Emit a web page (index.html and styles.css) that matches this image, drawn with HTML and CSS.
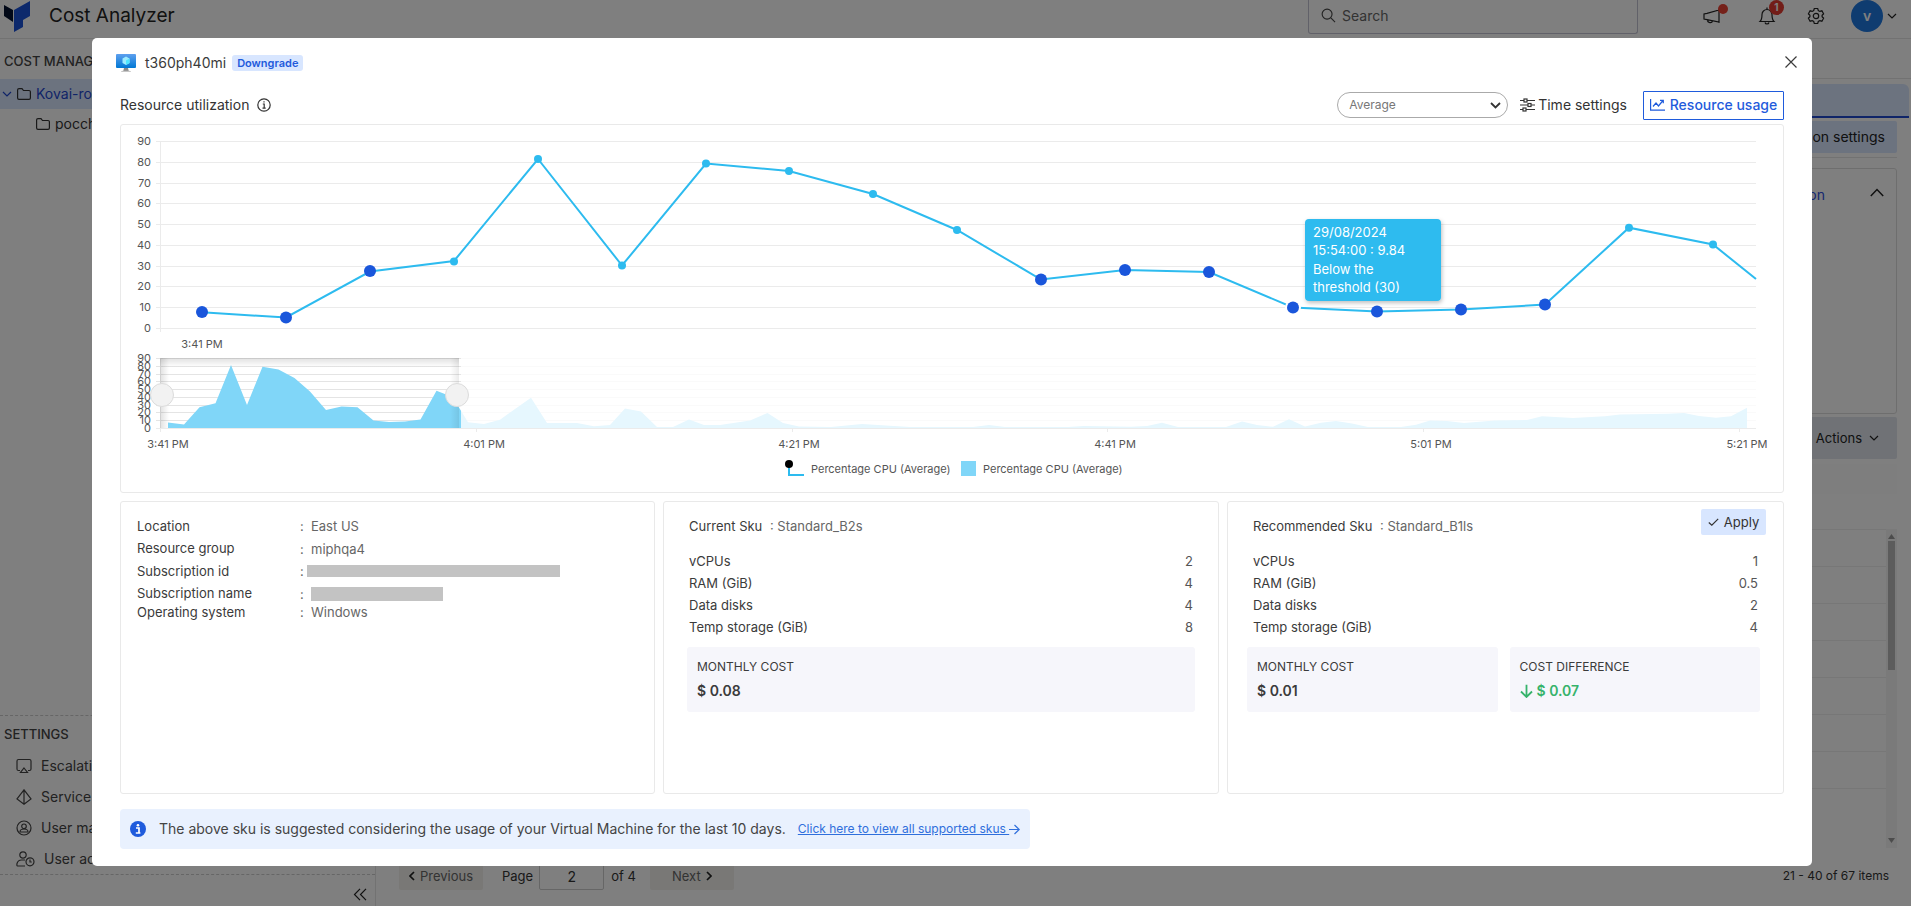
FILE: index.html
```html
<!DOCTYPE html>
<html lang="en">
<head>
<meta charset="utf-8">
<title>Cost Analyzer</title>
<link rel="stylesheet" href="styles.css">
</head>
<body>
<div class="app">
  <header class="topbar">
    <svg class="logo" width="28" height="32" viewBox="0 0 28 32" aria-hidden="true"><path d="M0 5l9 5v12L0 16z" fill="#02102e"/><path d="M26 1v15l-7 4v7l-9 5V10z" fill="#1b52d8"/></svg>
    <h1 class="app-name">Cost Analyzer</h1>
    <label class="search"><svg class="ico" width="15" height="15" viewBox="0 0 16 16"><circle cx="6.5" cy="6.5" r="5.3"/><path d="M10.5 10.5L15 15"/></svg><input type="text" placeholder="Search" aria-label="Search"></label>
    <nav class="top-actions">
      <button class="icon-btn" aria-label="Announcements"><svg class="ico" width="22" height="20" viewBox="0 0 22 20"><path d="M2 8v5l3 .6L17 16V4L5 7.400z M17 3v14 M5.500 14c0 3 4.500 3.500 5 .8"/></svg><i class="dot"></i></button>
      <button class="icon-btn" aria-label="Notifications"><svg class="ico" width="18" height="20" viewBox="0 0 18 20"><path d="M2 15.500c2-2 2-4 2-7a5 5 0 0 1 10 0c0 3 0 5 2 7z M7 16.500c.5 2 3.500 2 4 0 M9 3V1.500"/></svg><b class="count">1</b></button>
      <button class="icon-btn" aria-label="Settings"><svg class="ico" width="18" height="18" viewBox="0 0 18 18"><circle cx="9" cy="9" r="2.700"/><path d="M7.300 1.500h3.400l.6 2 1.500.9 2.100-.6 1.700 3-1.500 1.400v1.600l1.500 1.400-1.700 3-2.100-.6-1.500.9-.6 2H7.300l-.6-2-1.500-.9-2.100.6-1.700-3 1.500-1.400V8.200L1.400 6.800l1.700-3 2.100.6 1.500-.9z"/></svg></button>
      <button class="profile" aria-label="Profile"><span class="avatar">v</span><svg class="ico" width="10" height="6" viewBox="0 0 10 6"><path d="M1 1l4 4 4-4"/></svg></button>
    </nav>
  </header>
  <aside class="side">
    <h2 class="side-title">COST MANAGEMENT</h2>
    <a class="tree active" href="#"><svg class="ico blue" width="10" height="6" viewBox="0 0 10 6"><path d="M1 1l4 4 4-4"/></svg><svg class="ico" width="14" height="12" viewBox="0 0 14 12"><path d="M.6 10V2q0-1.400 1.400-1.400h3L6.500 2.500H12q1.400 0 1.400 1.300V10q0 1.400-1.400 1.400H2Q.6 11.400.6 10z"/></svg>Kovai-root</a>
    <a class="tree child" href="#"><svg class="ico" width="14" height="12" viewBox="0 0 14 12"><path d="M.6 10V2q0-1.400 1.400-1.400h3L6.500 2.500H12q1.400 0 1.400 1.300V10q0 1.400-1.400 1.400H2Q.6 11.400.6 10z"/></svg>poccharts</a>
    <section class="side-settings">
      <h2 class="side-title">SETTINGS</h2>
      <a href="#"><svg class="ico" width="16" height="16" viewBox="0 0 16 16"><path d="M4 12.500H2.500q-1.500 0-1.500-1.500V3q0-1.500 1.500-1.500h11Q15 1.500 15 3v8q0 1.500-1.500 1.500H12 M8 10l3.500 4.500h-7z"/></svg>Escalation policies</a>
      <a href="#"><svg class="ico" width="16" height="16" viewBox="0 0 16 16"><path d="M8 .8L1 10l7 5.200L15 10z M8 .8v14.400"/></svg>Service principals</a>
      <a href="#"><svg class="ico" width="16" height="16" viewBox="0 0 16 16"><circle cx="8" cy="8" r="7"/><circle cx="8" cy="6.300" r="2.300"/><path d="M4 12c0-4 8-4 8 0z"/></svg>User management</a>
      <a href="#"><svg class="ico" width="19" height="16" viewBox="0 0 19 16"><circle cx="7" cy="4" r="3.200"/><path d="M9 15H1.500Q.6 15 1 12.500 2 9 5.500 9H9"/><circle cx="14" cy="10.800" r="4"/><path d="M14 8.500V11h1.800"/></svg>User activities</a>
    </section>
    <button class="collapse" aria-label="Collapse"><svg class="ico" width="14" height="13" viewBox="0 0 14 13"><path d="M7 .8L1.500 6.500 7 12.200 M13 .8L7.500 6.500 13 12.200"/></svg></button>
  </aside>
  <main class="page">
    <div class="crumbs"></div>
    <div class="tabs"></div>
    <div class="tools"><button class="soft">Optimization settings</button></div>
    <section class="panel"><a href="#">Configuration</a><svg class="ico" width="14" height="9" viewBox="0 0 14 9"><path d="M.8 8L7 1.500 13.200 8"/></svg></section>
    <div class="actions"><button>Actions <svg class="ico" width="10" height="6" viewBox="0 0 10 6"><path d="M1 1l4 4 4-4"/></svg></button></div>
    <div class="thead"></div>
    <div class="grid-wrap">
      <div class="rows"><div></div><div></div><div></div><div></div><div></div><div></div><div></div><div></div></div>
      <div class="scroll"><svg width="7" height="5" viewBox="0 0 7 5"><path d="M0 5L3.500 0 7 5z"/></svg><span class="thumb"></span><svg width="7" height="5" viewBox="0 0 7 5"><path d="M0 0L3.500 5 7 0z"/></svg></div>
    </div>
    <footer class="pager">
      <button><svg class="ico" width="6" height="10" viewBox="0 0 6 10"><path d="M5 1L1 5l4 4"/></svg>Previous</button>
      <label for="pg">Page</label><input id="pg" type="text" value="2"><span>of 4</span>
      <button>Next<svg class="ico" width="6" height="10" viewBox="0 0 6 10"><path d="M1 1l4 4-4 4"/></svg></button>
      <span class="total">21 - 40 of 67 items</span>
    </footer>
  </main>
</div>

<div class="overlay">
<div class="modal" role="dialog" aria-label="t360ph40mi">
  <header class="m-head">
    <svg width="20" height="19" viewBox="0 0 20 19"><defs><linearGradient id="vm" x1="0" y1="0" x2="0" y2="1"><stop offset="0" stop-color="#5ea0ef"/><stop offset="1" stop-color="#0078d4"/></linearGradient></defs><rect width="20" height="14" rx="1" fill="url(#vm)"/><path d="M10 2.500l3.500 2v4.500L10 11 6.500 9V4.500z" fill="#9cebff"/><path d="M10 6.500V11l3.500-2V4.500z" fill="#50e6ff"/><path d="M8 14h4l1 4H7z" fill="#8a8a8a"/><path d="M5 18q0-1.300 2-1.300h6q2 0 2 1.300z" fill="#c6c6c6"/></svg>
    <h2>t360ph40mi</h2><span class="badge">Downgrade</span>
    <button class="close" aria-label="Close"><svg class="ico" width="14" height="14" viewBox="0 0 14 14"><path d="M1.500 1.500l11 11 M12.500 1.500l-11 11"/></svg></button>
  </header>
  <div class="m-tools">
    <h3>Resource utilization</h3>
    <svg class="ico" width="14" height="14" viewBox="0 0 14 14"><circle cx="7" cy="7" r="6.200"/><path d="M5.800 6H7.200v4 M5.500 10.200h3.200 M7 3.200v1.300"/></svg>
    <span class="select"><select aria-label="Aggregation"><option>Average</option></select><svg class="ico" width="11" height="7" viewBox="0 0 11 7"><path d="M1 1l4.500 4.500L10 1"/></svg></span>
    <button class="plain"><svg class="ico" width="15" height="14" viewBox="0 0 15 14"><path d="M0 2.500h4 M7 2.500h8 M0 7h8 M11 7h4 M0 11.500h3 M6 11.500h9"/><rect x="4" y="1" width="3" height="3"/><rect x="8" y="5.500" width="3" height="3"/><rect x="3" y="10" width="3" height="3"/></svg>Time settings</button>
    <button class="outline"><svg class="ico" width="15" height="12" viewBox="0 0 15 12"><path d="M.6 0v11.200H15 M3 7.500L6 4l2.500 3L13 1.500 M10 1.300h3.300v3"/></svg>Resource usage</button>
  </div>

  <section class="box chart">
    <svg viewBox="121 126 1662 367" role="img" aria-label="Percentage CPU (Average)">
      <defs>
        <path id="areaShape" d="M168 429.500V423.400L184 425.400 199.500 408.200 215.500 404.200 231 366 247 406 262.500 367.700 278.500 370.500 294.500 379 310 392.600 326 411 341.500 407.600 357.500 408.300 373.500 421.600 389 423.100 405 422.400 420.500 420.500 436.500 391.800 452.500 398 468 423.300 484 425 500 420.700 515 410 531 398.700 547 424 577 424 594 427.300 610 426 625 409.500 641 412.500 657 428 673 428 689 420.500 704 426 720 426 750 421.500 767.500 414 783 424 799 427.500 831 428 862 425 910 428 973 428 989 426 1005 428 1068 428 1084 427 1131 427.800 1147 427 1162 423.700 1178 428 1226 428 1242 422.500 1257 426 1273 427.800 1289 420.300 1305 427.500 1321 423.700 1336 422 1352 424.500 1368 428 1401 428 1416 425.700 1430 421.500 1447 422 1464 424 1495 421.500 1527 421 1542 417.300 1573 419 1605 417.300 1620 415.500 1668 414.700 1684 414 1699 417 1716 418.700 1731 417.300 1747 408.700V429.500z"/>
        <clipPath id="sel"><rect x="155" y="355" width="306" height="80"/></clipPath>
        <clipPath id="rest"><rect x="461" y="355" width="1300" height="80"/></clipPath>
        <linearGradient id="edgeY" x1="0" y1="0" x2="0" y2="1"><stop offset="0" stop-color="#000" stop-opacity=".12"/><stop offset="1" stop-color="#000" stop-opacity="0"/></linearGradient>
        <linearGradient id="edgeL"><stop offset="0" stop-color="#000" stop-opacity=".12"/><stop offset="1" stop-color="#000" stop-opacity="0"/></linearGradient>
        <linearGradient id="edgeR"><stop offset="0" stop-color="#000" stop-opacity="0"/><stop offset="1" stop-color="#000" stop-opacity=".08"/></linearGradient>
        <filter id="tipShadow" x="-10%" y="-10%" width="120%" height="125%"><feDropShadow dx="1" dy="2" stdDeviation="2" flood-opacity=".25"/></filter>
      </defs>
      <path class="gridline" d="M156 142.500H1756M156 163.500H1756M156 184.500H1756M156 204.500H1756M156 225.500H1756M156 246.500H1756M156 267.500H1756M156 287.500H1756M156 308.500H1756M156 329.500H1756M160.500 142V333"/>
      <g class="axis end"><text x="151" y="146">90</text><text x="151" y="167">80</text><text x="151" y="188">70</text><text x="151" y="208">60</text><text x="151" y="229">50</text><text x="151" y="250">40</text><text x="151" y="271">30</text><text x="151" y="291">20</text><text x="151" y="312">10</text><text x="151" y="333">0</text></g>
      <text class="axis mid" x="202" y="349">3:41 PM</text>
      <path class="series" d="M202 313.300L286 318.500 370 272.500 454 262 538 160 622 266.500 706 164.500 789 172 873 195 957 231 1041 280.500 1125 271 1209 273 1293 308.500 1377 312.500 1461 310.500 1545 305.500 1629 228.700 1713 245.500 1756 280"/>
      <circle cx="1293" cy="308.500" r="8" fill="#fff"/>
      <g class="low"><circle cx="202" cy="313" r="6"/><circle cx="286" cy="318.500" r="6"/><circle cx="370" cy="272" r="6"/><circle cx="1041" cy="280.500" r="6"/><circle cx="1125" cy="271" r="6"/><circle cx="1209" cy="273" r="6"/><circle cx="1293" cy="308.500" r="6"/><circle cx="1377" cy="312.500" r="6"/><circle cx="1461" cy="310.500" r="6"/><circle cx="1545" cy="305.500" r="6"/></g>
      <g class="ok"><circle cx="454" cy="262.500" r="4"/><circle cx="538" cy="160" r="4"/><circle cx="622" cy="266.500" r="4"/><circle cx="706" cy="164.500" r="4"/><circle cx="789" cy="172" r="4"/><circle cx="873" cy="195" r="4"/><circle cx="957" cy="231" r="4"/><circle cx="1629" cy="228.700" r="4"/><circle cx="1713" cy="245.500" r="4"/></g>

      <g class="axis end"><text x="151" y="363">90</text><text x="151" y="371">80</text><text x="151" y="379">70</text><text x="151" y="386">60</text><text x="151" y="394">50</text><text x="151" y="402">40</text><text x="151" y="410">30</text><text x="151" y="417">20</text><text x="151" y="425">10</text><text x="151" y="433">0</text></g>
      <path class="gridline dark" clip-path="url(#sel)" d="M156 359.500H1756M156 367.500H1756M156 375.500H1756M156 382.500H1756M156 390.500H1756M156 398.500H1756M156 406.500H1756M156 413.500H1756M156 421.500H1756"/>
      <path class="gridline faint" clip-path="url(#rest)" d="M156 359.500H1756M156 367.500H1756M156 375.500H1756M156 382.500H1756M156 390.500H1756M156 398.500H1756M156 406.500H1756M156 413.500H1756M156 421.500H1756"/>
      <use href="#areaShape" clip-path="url(#sel)" fill="#80d6f8"/>
      <use href="#areaShape" clip-path="url(#rest)" fill="#e6f7fe"/>
      <path class="gridline" d="M156 429.500H1756M160.500 359V433M476.500 430V433M792.500 430V433M1107.500 430V433M1423.500 430V433M1739.500 430V433"/>
      <rect x="160" y="359" width="299" height="9" fill="url(#edgeY)"/><rect x="160" y="359" width="9" height="70" fill="url(#edgeL)"/><rect x="450" y="359" width="9" height="70" fill="url(#edgeR)"/>
      <circle class="handle" cx="162" cy="396" r="11.500"/><circle class="handle" cx="457" cy="396" r="11.500"/>
      <g class="axis mid"><text x="168" y="449">3:41 PM</text><text x="484" y="449">4:01 PM</text><text x="799" y="449">4:21 PM</text><text x="1115" y="449">4:41 PM</text><text x="1431" y="449">5:01 PM</text><text x="1747" y="449">5:21 PM</text></g>

      <path d="M789 466V476H804" fill="none" stroke="#2dbbef" stroke-width="2"/><circle cx="789" cy="465" r="4"/>
      <text class="axis" x="811" y="474">Percentage CPU (Average)</text>
      <rect x="961" y="462" width="15" height="15" fill="#80d6f8"/>
      <text class="axis" x="983" y="474">Percentage CPU (Average)</text>

      <rect x="1305" y="220" width="136" height="82" rx="4" fill="#2dbbef" filter="url(#tipShadow)"/>
      <text class="tip"><tspan x="1313" y="238">29/08/2024</tspan><tspan x="1313" y="256">15:54:00 : 9.84</tspan><tspan x="1313" y="275">Below the</tspan><tspan x="1313" y="293">threshold (30)</tspan></text>
    </svg>
  </section>

  <div class="cards">
    <section class="box info">
      <dl>
        <dt>Location</dt><dd>East US</dd>
        <dt>Resource group</dt><dd>miphqa4</dd>
        <dt>Subscription id</dt><dd><span class="mask id"></span></dd>
        <dt>Subscription name</dt><dd><span class="mask name"></span></dd>
        <dt class="tight">Operating system</dt><dd class="tight">Windows</dd>
      </dl>
    </section>
    <section class="box sku">
      <h4>Current Sku <span>: Standard_B2s</span></h4>
      <table><tr><th>vCPUs</th><td>2</td></tr><tr><th>RAM (GiB)</th><td>4</td></tr><tr><th>Data disks</th><td>4</td></tr><tr><th>Temp storage (GiB)</th><td>8</td></tr></table>
      <div class="costs"><div class="cost">MONTHLY COST<strong>$ 0.08</strong></div></div>
    </section>
    <section class="box sku rec">
      <h4>Recommended Sku <span>: Standard_B1ls</span></h4>
      <button class="apply"><svg class="ico" width="11" height="8" viewBox="0 0 11 8"><path d="M.8 4.500L3.800 7.200 10.200.8"/></svg>Apply</button>
      <table><tr><th>vCPUs</th><td>1</td></tr><tr><th>RAM (GiB)</th><td>0.5</td></tr><tr><th>Data disks</th><td>2</td></tr><tr><th>Temp storage (GiB)</th><td>4</td></tr></table>
      <div class="costs"><div class="cost">MONTHLY COST<strong>$ 0.01</strong></div><div class="cost">COST DIFFERENCE<strong class="green"><svg class="ico" width="13" height="14" viewBox="0 0 13 14"><path d="M6.500.8V13 M1 7.500L6.500 13 12 7.500"/></svg>$ 0.07</strong></div></div>
    </section>
  </div>

  <div class="note">
    <svg width="16" height="16" viewBox="0 0 16 16"><circle cx="8" cy="8" r="8" fill="#1f5bdc"/><path d="M6 7h3v5 M5.800 12h4.600" fill="none" stroke="#fff" stroke-width="1.700"/><circle cx="8" cy="4.200" r="1.300" fill="#fff"/></svg>
    <span>The above sku is suggested considering the usage of your Virtual Machine for the last 10 days.</span>
    <a href="#"><u>Click here to view all supported skus </u><svg class="ico" width="11" height="11" viewBox="0 0 11 11"><path d="M0 5.500h10 M5.500 1l4.700 4.500L5.500 10"/></svg></a>
  </div>
</div>
</div>
</body>
</html>
```

FILE: styles.css
```css
* { box-sizing: border-box; }
body { margin: 0; font: 14px/20px Inter, "Noto Sans", sans-serif; color: #3b3b3b; background: #fff; }
h1, h2, h3, h4, dl, dd { margin: 0; font-weight: 400; }
button, input, select { font: inherit; color: inherit; }
button { border: 0; background: none; padding: 0; display: flex; align-items: center; }
a { color: inherit; text-decoration: none; }
.ico { fill: none; stroke: currentColor; stroke-width: 1.2; flex: none; }

.app { display: grid; grid-template: 39px 1fr / 376px 1fr; height: 100vh; overflow: hidden; }
.topbar { grid-column: 1 / 3; display: flex; align-items: flex-start; border-bottom: 1px solid #e4e4e4; padding-left: 4px; }
.app-name { font-size: 19px; line-height: 32px; margin-left: 17px; color: #222; }
.search { margin-left: auto; width: 330px; height: 34px; display: flex; align-items: center; gap: 6px; padding: 0 12px 2px; border: 1px solid #c3c3d3; border-top: 0; border-radius: 0 0 3px 3px; color: #444; }
.search input { border: 0; background: none; width: 100%; height: 24px; padding: 0; outline: 0; }
.search input::placeholder { color: #666; }
.top-actions { display: flex; align-items: center; height: 32px; margin-left: 64px; padding-right: 14px; color: #222; }
.icon-btn { position: relative; margin-right: 34px; }
.icon-btn:nth-child(2) { margin-right: 31px; }
.icon-btn:nth-child(3) { margin-right: 26px; }
.dot { position: absolute; right: -4px; top: -2px; width: 10px; height: 10px; border-radius: 50%; background: #ea4335; }
.count { position: absolute; right: -8px; top: -6px; width: 15px; height: 15px; border-radius: 50%; background: #e53b30; color: #fff; font-size: 10px; line-height: 15px; }
.profile { gap: 4px; }
.avatar { width: 32px; height: 32px; border-radius: 50%; background: #1f78e0; color: #fff; font-weight: 600; line-height: 31px; }

.side { display: flex; flex-direction: column; border-right: 1px solid #e4e4e4; padding-top: 12px; color: #444; }
.side-title { font-size: 13px; font-weight: 500; line-height: 20px; padding: 0 4px; }
.tree { display: flex; align-items: center; gap: 5px; height: 30px; padding-left: 2px; color: #333; }
.tree.active { margin-top: 8px; background: #d8e6ff; color: #1f48d0; }
.tree .ico:not(.blue) { color: #333; }
.tree.child { padding-left: 36px; }
.side-settings { margin-top: auto; border: dashed #ccc; border-width: 1px 0; padding: 8px 0 0; display: flex; flex-direction: column; }
.side-settings a { display: flex; align-items: center; gap: 9px; height: 31px; padding-left: 16px; }
.side-settings h2 { margin-bottom: 6px; }
.collapse { margin: 13px 8px 5px auto; color: #222; }

.page { display: flex; flex-direction: column; padding: 0 14px 0 0; }
.crumbs { height: 40px; flex: none; border-bottom: 1px solid #e4e4e4; margin-right: -14px; }
.tabs { height: 34px; flex: none; margin: 5px -12px 0 0; background: #d8e6ff; border-bottom: 2px solid #1f48d0; border-radius: 6px 6px 0 0; }
.tools { height: 40px; flex: none; padding-top: 3px; border-bottom: 1px solid #e4e4e4; }
.soft { background: #d8e6ff; height: 32px; padding: 0 12px; margin-left: auto; border-radius: 2px; color: #222; }
.panel { height: 246px; flex: none; margin-top: 10px; border: 1px solid #ddd; border-radius: 3px; padding: 16px 12px 0 0; display: flex; justify-content: flex-end; align-items: flex-start; color: #222; }
.panel a { color: #2f50e0; margin-right: 45px; }
.panel .ico { stroke-width: 1.5; margin-top: 3px; }
.actions { height: 42px; flex: none; margin-top: 3px; background: #e1e5ec; border-radius: 2px; display: flex; justify-content: flex-end; padding-right: 18px; color: #222; font-size: 13px; }
.actions button { gap: 7px; }
.thead { height: 30px; flex: none; margin-top: 5px; background: #fcfcfc; }
.grid-wrap { display: flex; margin-top: 35px; flex: none; }
.rows { flex: 1; }
.rows div { height: 37px; border-top: 1px solid #eee; }
.scroll { width: 11px; height: 319px; background: #f4f4f4; display: flex; flex-direction: column; align-items: center; padding: 5px 0; fill: #999; }
.thumb { width: 7px; height: 129px; background: #b8b8b8; margin: 2px 0 auto; }
.pager { display: flex; align-items: center; margin: 14px 8px 0 23px; height: 28px; flex: none; color: #333; }
.pager button { background: #f2f1ed; width: 84px; height: 28px; justify-content: center; gap: 5px; font-size: 13px; color: #666; border-radius: 2px; }
.pager .ico { stroke-width: 1.7; color: #222; }
.pager label { margin: 0 6px 0 19px; font-size: 13px; }
.pager input { width: 65px; height: 28px; border: 1px solid #ccc; text-align: center; background: none; padding: 0; border-radius: 2px; }
.pager span { margin: 0 14px 0 7px; font-size: 13px; }
.pager .total { margin: 0 0 0 auto; font-size: 12px; }

.overlay { position: fixed; inset: 0; background: rgba(0, 0, 0, .5); padding: 38px 99px 0 92px; }
.modal { background: #fff; border-radius: 5px; padding: 14px 28px 17px; }
.m-head { display: flex; align-items: center; margin-left: -4px; height: 22px; }
.m-head h2 { font-size: 14px; margin: 0 6px 0 9px; }
.badge { background: #d8e6ff; color: #1f5bdc; font-size: 11px; font-weight: 600; line-height: 16px; padding: 0 5px; border-radius: 3px; }
.close { margin: -3px -14px 0 auto; }
.m-tools { display: flex; align-items: center; height: 30px; margin: 16px 0 4px; color: #333; }
.m-tools h3 { font-size: 14px; margin-right: 8px; }
.select { position: relative; margin-left: auto; display: flex; align-items: center; }
.select select { appearance: none; width: 171px; height: 26px; border: 1px solid #aaa; border-radius: 13px; background: #fff; padding: 0 11px; font-size: 12px; color: #777; }
.select .ico { position: absolute; right: 7px; stroke-width: 1.8; pointer-events: none; }
.plain { gap: 3px; margin: 0 16px 0 12px; }
.outline { height: 29px; width: 141px; justify-content: center; gap: 5px; border: 1px solid #1f5bdc; border-radius: 1px; color: #1f5bdc; font-weight: 500; }

.box { border: 1px solid #e9e9e9; border-radius: 3px; }
.chart svg { display: block; width: 100%; }
.gridline { stroke: #ebebeb; fill: none; }
.gridline.dark { stroke: #e4e4e4; }
.gridline.faint { stroke: #fafafa; }
.axis { font-size: 11px; fill: #555; }
.end { text-anchor: end; }
.mid { text-anchor: middle; }
.series { fill: none; stroke: #2dbbef; stroke-width: 2; }
.low { fill: #1a56db; }
.ok { fill: #2dbbef; }
.handle { fill: #f2f2f2; stroke: #dcdcdc; }
.tip { font-size: 13px; fill: #fff; }

.cards { display: grid; grid-template-columns: 535fr 556fr 557fr; gap: 8px; margin-top: 8px; }
.cards .box { min-height: 293px; }
.info { padding: 13px 16px; font-size: 13px; }
.info dl { display: grid; grid-template-columns: 163px 1fr; grid-template-rows: 22px 23px 22px 23px 14px; line-height: 22px; }
.info .tight { line-height: 14px; }
.info dd { color: #666; display: flex; align-items: center; }
.info dd::before { content: ":"; width: 11px; }
.mask { background: #c3c3c3; }
.mask.id { width: 253px; height: 12px; margin-left: -4px; }
.mask.name { width: 132px; height: 14px; }
.sku { padding: 14px 23px; font-size: 13px; position: relative; }
.sku h4 { padding-left: 2px; line-height: 20px; }
.sku h4 span { color: #666; margin-left: 4px; }
.sku table { width: 100%; border-collapse: collapse; margin: 14px 0 9px; }
.sku tr { height: 22px; }
.sku th { font-weight: 400; text-align: left; padding: 1px 2px; }
.sku td { text-align: right; padding: 1px 2px; color: #555; }
.costs { display: flex; gap: 12px; }
.cost { flex: 1; height: 65px; background: #f6f6fb; border-radius: 3px; padding: 10px; font-size: 12px; }
.cost strong { display: flex; align-items: center; gap: 4px; font-size: 14px; font-weight: 600; line-height: 28px; }
.cost .green { color: #36b36b; }
.cost .ico { stroke-width: 1.8; }
.rec { padding-left: 19px; }
.rec h4, .rec th { padding-left: 6px; }
.apply { position: absolute; right: 17px; top: 7px; height: 26px; width: 65px; justify-content: center; gap: 5px; background: #d8e6ff; border-radius: 2px; color: #333; }

.note { display: flex; align-items: center; width: fit-content; height: 40px; margin-top: 15px; padding: 0 10px; background: #e9f1fe; border-radius: 4px; color: #444; font-size: 14px; }
.note span { margin: 0 12px 0 13px; }
.note a { color: #2f6fdc; display: flex; align-items: center; white-space: pre; font-size: 12px; }
```
